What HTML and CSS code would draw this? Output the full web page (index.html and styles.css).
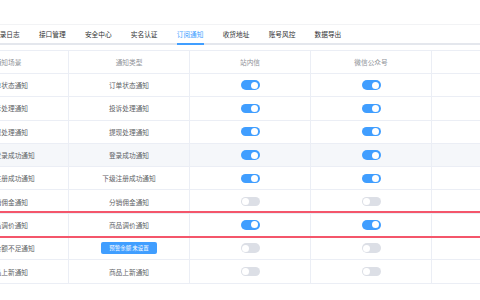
FILE: index.html
```html
<!DOCTYPE html>
<html lang="zh-CN">
<head>
  <meta charset="UTF-8">
  <meta name="viewport" content="width=device-width, initial-scale=1.0">
  <title>订阅通知</title>
  <link rel="stylesheet" href="styles.css">
</head>
<body>
  <div class="page">
    <!-- Tabs -->
    <div class="tabs">
      <div class="tab">登录日志</div>
      <div class="tab">接口管理</div>
      <div class="tab">安全中心</div>
      <div class="tab">实名认证</div>
      <div class="tab active">订阅通知</div>
      <div class="tab">收货地址</div>
      <div class="tab">账号风控</div>
      <div class="tab">数据导出</div>
    </div>

    <!-- Notification table -->
    <div class="table">
      <div class="row head">
        <div class="cell">通知场景</div>
        <div class="cell">通知类型</div>
        <div class="cell">站内信</div>
        <div class="cell">微信公众号</div>
        <div class="cell"></div>
      </div>
      <div class="row">
        <div class="cell">订单状态通知</div>
        <div class="cell">订单状态通知</div>
        <div class="cell"><span class="switch"></span></div>
        <div class="cell"><span class="switch"></span></div>
        <div class="cell"></div>
      </div>
      <div class="row">
        <div class="cell">投诉处理通知</div>
        <div class="cell">投诉处理通知</div>
        <div class="cell"><span class="switch"></span></div>
        <div class="cell"><span class="switch"></span></div>
        <div class="cell"></div>
      </div>
      <div class="row">
        <div class="cell">提现处理通知</div>
        <div class="cell">提现处理通知</div>
        <div class="cell"><span class="switch"></span></div>
        <div class="cell"><span class="switch"></span></div>
        <div class="cell"></div>
      </div>
      <div class="row hover">
        <div class="cell">会员登录成功通知</div>
        <div class="cell">登录成功通知</div>
        <div class="cell"><span class="switch"></span></div>
        <div class="cell"><span class="switch"></span></div>
        <div class="cell"></div>
      </div>
      <div class="row">
        <div class="cell">下级注册成功通知</div>
        <div class="cell">下级注册成功通知</div>
        <div class="cell"><span class="switch"></span></div>
        <div class="cell"><span class="switch"></span></div>
        <div class="cell"></div>
      </div>
      <div class="row">
        <div class="cell">分销佣金通知</div>
        <div class="cell">分销佣金通知</div>
        <div class="cell"><span class="switch off"></span></div>
        <div class="cell"><span class="switch off"></span></div>
        <div class="cell"></div>
      </div>
      <div class="row marked">
        <div class="cell">商品调价通知</div>
        <div class="cell">商品调价通知</div>
        <div class="cell"><span class="switch"></span></div>
        <div class="cell"><span class="switch"></span></div>
        <div class="cell"></div>
      </div>
      <div class="row">
        <div class="cell">预警余额不足通知</div>
        <div class="cell"><span class="btn">预警余额 未设置</span></div>
        <div class="cell"><span class="switch off"></span></div>
        <div class="cell"><span class="switch off"></span></div>
        <div class="cell"></div>
      </div>
      <div class="row">
        <div class="cell">商品上新通知</div>
        <div class="cell">商品上新通知</div>
        <div class="cell"><span class="switch off"></span></div>
        <div class="cell"><span class="switch off"></span></div>
        <div class="cell"></div>
      </div>
    </div>
  </div>
</body>
</html>
```

FILE: styles.css
```css
body {
  margin: 0;
  width: 480px;
  height: 300px;
  overflow: hidden;
  background-color: #fff;
  font-family: "Noto Sans CJK SC", "Noto Sans", sans-serif;
}

/* page is wider than the window, its left part is cut off */
.page {
  margin-left: -52px;
  width: 620px;
  padding-top: 24px;
}

.tabs {
  display: flex;
  gap: 19.2px;
  padding-left: 45px;
  height: 18px;
  border-top: 1px solid #f2f3f5;
  border-bottom: 2px solid #e4e7ed;
}

.tab {
  position: relative;
  font-size: 6.7px;
  line-height: 18px;
  color: #303133;
  white-space: nowrap;
}

.tab.active {
  color: #409eff;
}

.tab.active::after {
  content: "";
  position: absolute;
  left: 0;
  right: 0;
  bottom: -2px;
  height: 2px;
  background-color: #409eff;
}

.table {
  margin-top: 5px;
  border-top: 1px solid #ebeef5;
}

.row {
  display: grid;
  grid-template-columns: repeat(5, 121px);
  height: 23.3px;
  box-sizing: border-box;
  border-bottom: 1px solid #ebeef5;
}

.row.head {
  height: 23px;
}

.row.hover {
  background-color: #f5f7fa;
}

/* red marker lines around the row */
.row.marked {
  position: relative;
}

.row.marked::after {
  content: "";
  position: absolute;
  left: 0;
  right: 0;
  top: -3px;
  bottom: -1.5px;
  border-top: 2px solid #f4566b;
  border-bottom: 2px solid #f4566b;
  pointer-events: none;
}

.cell {
  display: flex;
  align-items: center;
  justify-content: center;
  border-right: 1px solid #ebeef5;
  font-size: 6.7px;
  color: #606266;
  white-space: nowrap;
  overflow: hidden;
}

.head .cell {
  color: #909399;
}

.switch {
  position: relative;
  width: 19px;
  height: 9.5px;
  border-radius: 5px;
  background-color: #409eff;
}

.switch::after {
  content: "";
  position: absolute;
  top: 1.25px;
  right: 1.25px;
  width: 7px;
  height: 7px;
  border-radius: 50%;
  background-color: #fff;
}

.switch.off {
  background-color: #dcdfe6;
}

.switch.off::after {
  right: auto;
  left: 1.25px;
}

.btn {
  display: flex;
  align-items: center;
  height: 12px;
  padding: 0 8.5px;
  border-radius: 2px;
  background-color: #409eff;
  color: #fff;
  font-size: 5.5px;
}
```
